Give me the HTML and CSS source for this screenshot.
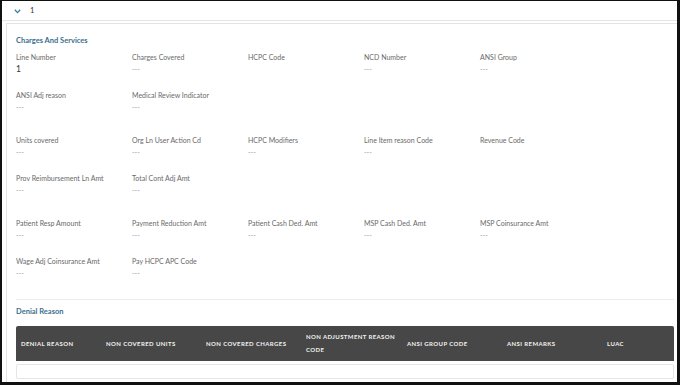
FILE: index.html
```html
<!DOCTYPE html>
<html>
<head>
<meta charset="utf-8">
<link rel="stylesheet" href="styles.css">
</head>
<body>
<div class="frame">
  <div class="acc-head">
    <svg class="chev" width="7" height="5" viewBox="0 0 7 5"><polyline points="0.8,0.8 3.5,3.6 6.2,0.8" fill="none" stroke="#2f7fa6" stroke-width="1.3"/></svg>
    <span class="acc-num">1</span>
  </div>
  <div class="card">
    <div class="sec-title">Charges And Services</div>
    <div class="group">
      <div class="field"><div class="lbl">Line Number</div><div class="val strong">1</div></div>
      <div class="field"><div class="lbl">Charges Covered</div><div class="val">---</div></div>
      <div class="field"><div class="lbl">HCPC Code</div><div class="val"></div></div>
      <div class="field"><div class="lbl">NCD Number</div><div class="val">---</div></div>
      <div class="field"><div class="lbl">ANSI Group</div><div class="val">---</div></div>
      <div class="field"><div class="lbl">ANSI Adj reason</div><div class="val">---</div></div>
      <div class="field"><div class="lbl">Medical Review Indicator</div><div class="val">---</div></div>
    </div>
    <div class="group">
      <div class="field"><div class="lbl">Units covered</div><div class="val">---</div></div>
      <div class="field"><div class="lbl">Org Ln User Action Cd</div><div class="val">---</div></div>
      <div class="field"><div class="lbl">HCPC Modifiers</div><div class="val">---</div></div>
      <div class="field"><div class="lbl">Line Item reason Code</div><div class="val">---</div></div>
      <div class="field"><div class="lbl">Revenue Code</div><div class="val"></div></div>
      <div class="field"><div class="lbl">Prov Reimbursement Ln Amt</div><div class="val">---</div></div>
      <div class="field"><div class="lbl">Total Cont Adj Amt</div><div class="val">---</div></div>
    </div>
    <div class="group">
      <div class="field"><div class="lbl">Patient Resp Amount</div><div class="val">---</div></div>
      <div class="field"><div class="lbl">Payment Reduction Amt</div><div class="val">---</div></div>
      <div class="field"><div class="lbl">Patient Cash Ded. Amt</div><div class="val">---</div></div>
      <div class="field"><div class="lbl">MSP Cash Ded. Amt</div><div class="val">---</div></div>
      <div class="field"><div class="lbl">MSP Coinsurance Amt</div><div class="val">---</div></div>
      <div class="field"><div class="lbl">Wage Adj Coinsurance Amt</div><div class="val">---</div></div>
      <div class="field"><div class="lbl">Pay HCPC APC Code</div><div class="val">---</div></div>
    </div>
    <div class="divider"></div>
    <div class="sec-title denial">Denial Reason</div>
    <div class="thead">
      <div class="th">DENIAL REASON</div>
      <div class="th">NON COVERED UNITS</div>
      <div class="th">NON COVERED CHARGES</div>
      <div class="th">NON ADJUSTMENT REASON CODE</div>
      <div class="th">ANSI GROUP CODE</div>
      <div class="th">ANSI REMARKS</div>
      <div class="th">LUAC</div>
    </div>
    <div class="trow"></div>
  </div>
</div>
</body>
</html>
```

FILE: styles.css
```css
html, body {
  margin: 0;
  padding: 0;
  background: #fff;
}
body {
  font-family: Lato, "Liberation Sans", sans-serif;
}
.frame {
  width: 680px;
  height: 385px;
  box-sizing: border-box;
  border-style: solid;
  border-color: #111;
  border-width: 1px 3px 3px 2px;
  overflow: hidden;
  display: flex;
  flex-direction: column;
}
.acc-head {
  height: 19px;
  display: flex;
  align-items: center;
  padding-left: 12px;
  gap: 9px;
  border-bottom: 1px solid #e4e4e4;
  flex-shrink: 0;
}
.chev { display: block; margin-top: 1px; }
.acc-num {
  font-size: 7.5px;
  color: #333;
}
.card {
  margin-top: 2px;
  margin-left: 4px;
  border-left: 1px solid #e4e4e4;
  border-top: 1px solid #e4e4e4;
  padding: 11px 3px 0 9px;
  flex: 1;
  min-height: 0;
}
.sec-title {
  font-size: 7.5px;
  font-weight: 700;
  color: #3b6f8f;
  line-height: 12px;
  height: 12px;
  margin-bottom: 4.5px;
}
.group {
  display: grid;
  grid-template-columns: repeat(5, 116px);
  row-gap: 15.5px;
  margin-bottom: 21.5px;
}
.field { height: 23px; }
.lbl {
  font-size: 7px;
  color: #6a6a6a;
  line-height: 11px;
  height: 11px;
  white-space: nowrap;
}
.val {
  font-size: 7px;
  color: #999;
  line-height: 12px;
  height: 12px;
}
.val.strong {
  font-size: 8.5px;
  color: #333;
}
.divider {
  height: 1px;
  background: #ececec;
  margin-top: -2px;
  margin-bottom: 6px;
}
.sec-title.denial { margin-bottom: 8px; }
.thead {
  height: 35px;
  background: #474747;
  border-radius: 2px 2px 0 0;
  display: grid;
  grid-template-columns: 85px 100px 100px 101px 100px 100px 1fr;
  align-items: center;
}
.th {
  padding-left: 5px;
  padding-right: 6px;
  color: #f2f2f2;
  font-size: 6px;
  font-weight: 700;
  letter-spacing: 0.4px;
  line-height: 13px;
}
.trow {
  margin-top: 3px;
  height: 13px;
  border: 1px solid #e6e6e6;
  border-radius: 2px;
}
```
